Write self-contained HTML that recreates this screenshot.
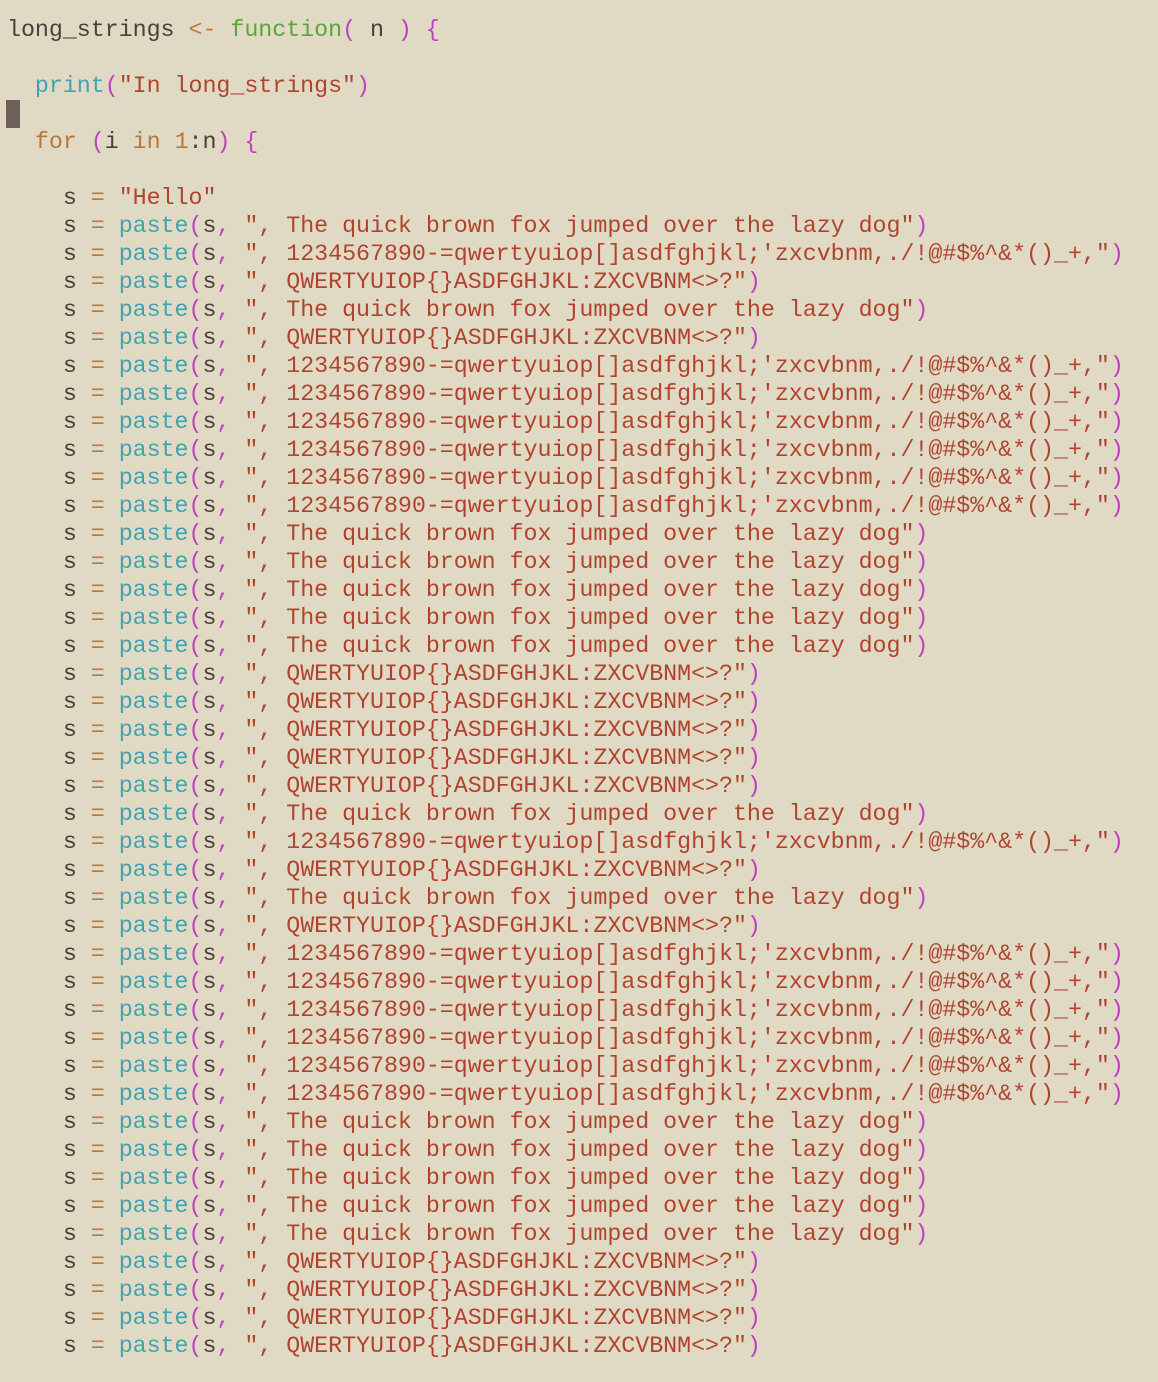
<!DOCTYPE html>
<html><head><meta charset="utf-8"><style>
html,body{margin:0;padding:0;background:#e0dac5;width:1158px;height:1382px;overflow:hidden}
pre{margin:0;position:absolute;left:7px;top:17px;font-family:"Liberation Mono","Courier New",monospace;font-size:23.33px;letter-spacing:-0.04px;line-height:28px;color:#4a403b}
.o{color:#b8783a}.g{color:#5aa53a}.p{color:#c040c0}.t{color:#3fa3b0}.r{color:#b0432e}
.cur{position:absolute;left:6px;top:100px;width:14px;height:28px;background:#6e5f58}
</style></head><body>
<div class="cur"></div>
<pre id="c">long_strings <span class="o">&lt;-</span> <span class="g">function</span><span class="p">(</span> n <span class="p">)</span> <span class="p">{</span>

  <span class="t">print</span><span class="p">(</span><span class="r">"In long_strings"</span><span class="p">)</span>

  <span class="o">for</span> <span class="p">(</span>i <span class="o">in</span> <span class="o">1</span>:n<span class="p">)</span> <span class="p">{</span>

    s <span class="o">=</span> <span class="r">"Hello"</span>
</pre>
<script>
var A='The quick brown fox jumped over the lazy dog',B="1234567890-=qwertyuiop[]asdfghjkl;'zxcvbnm,./!@#$%^&amp;*()_+,",C='QWERTYUIOP{}ASDFGHJKL:ZXCVBNM&lt;&gt;?';
var seq=[A,B,C,A,C,B,B,B,B,B,B,A,A,A,A,A,C,C,C,C,C,A,B,C,A,C,B,B,B,B,B,B,A,A,A,A,A,C,C,C,C];
var h='';seq.forEach(function(x){h+='    s <span class="o">=</span> <span class="t">paste</span><span class="p">(</span>s<span class="p">,</span> <span class="r">", '+x+'"</span><span class="p">)</span>\n';});
document.getElementById('c').innerHTML+=h;
</script>
</body></html>
